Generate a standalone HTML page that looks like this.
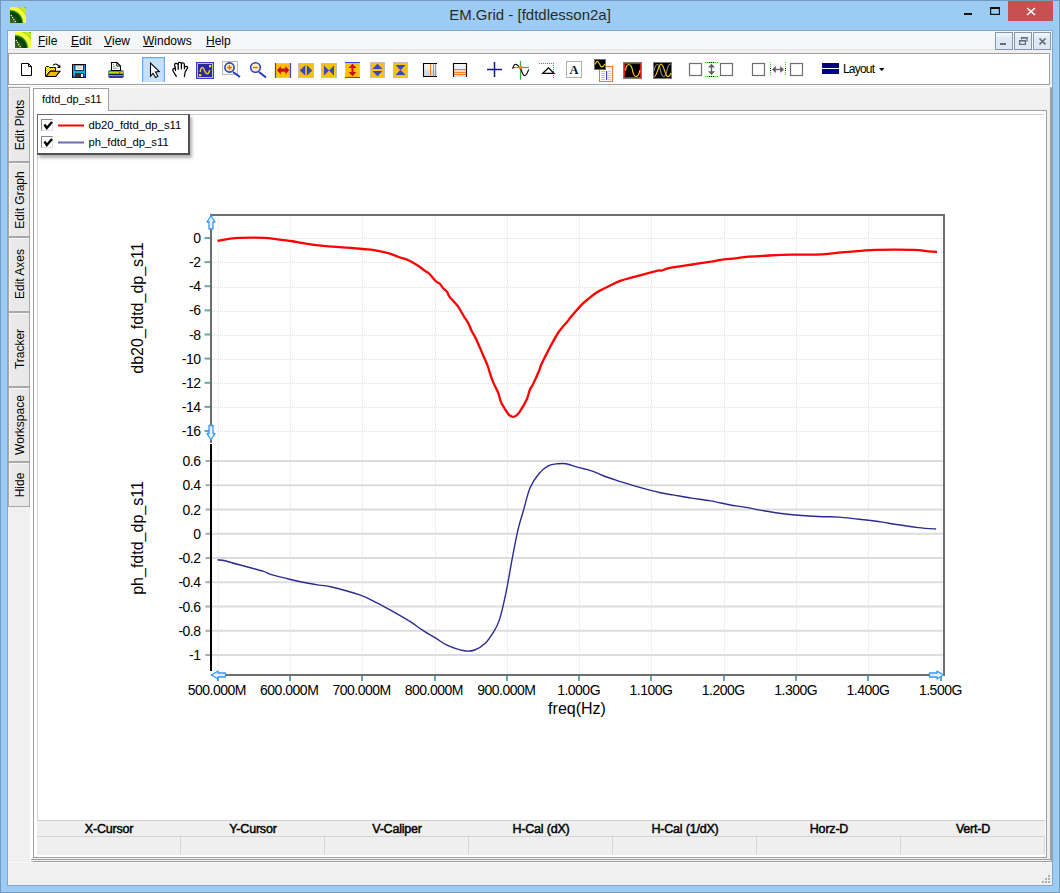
<!DOCTYPE html>
<html><head><meta charset="utf-8">
<style>
*{margin:0;padding:0;box-sizing:border-box}
html,body{width:1060px;height:893px;overflow:hidden;background:#f0f0f0;font-family:"Liberation Sans",sans-serif;color:#000}
.a{position:absolute}
#frame{left:0;top:0;width:1060px;height:893px;background:#9ccbf3;border:1px solid #7598bb}
#client{left:7px;top:30px;width:1046px;height:856px;border:1px solid #7fa8ce;background:#f0f0f0}
#title{left:0;top:6px;width:1060px;text-align:center;font-size:15px;color:#2a2a2a;}
#menubar{left:8px;top:31px;width:1044px;height:18px;background:#f5f6f7}
#menusep{left:8px;top:49px;width:1044px;height:4px;background:#efefef;border-top:1px solid #e6e6e6}
.menu{top:34px;font-size:12px;line-height:14px}
.menu u{text-decoration:none;position:relative}
.menu u:after{content:'';position:absolute;left:0;right:0;top:12px;height:1px;background:#000}
#toolbar{left:8px;top:53px;width:1042px;height:32px;background:#fff;border:1px solid #a0a0a0}
#main{left:8px;top:85px;width:1044px;height:800px;background:#f0f0f0;border-top:1px solid #fff}
#status{left:8px;top:862px;width:1044px;height:23px;background:#f0f0f0;border-top:1px solid #fafafa}
.vtab{left:8px;width:22px;border:1px solid #a8a8a8;background:#e9e9e9;box-shadow:inset 1px 1px #f6f6f6}
.vtab span{position:absolute;left:calc(50% + 1px);top:50%;transform:translate(-50%,-50%) rotate(-90deg);font-size:12px;white-space:nowrap}
#tabpage{left:33px;top:110px;width:1014px;height:748px;background:#fff;border:1px solid #a0a0a0}
#outerframe{left:30px;top:87px;width:1022px;height:775px;border-left:3px solid #fff;border-top:1px solid #fff;border-right:1px solid #a0a0a0;border-bottom:1px solid #a0a0a0}
#outerframe2{left:31px;top:87px;width:1020px;height:773px;border-right:1px solid #a0a0a0;border-bottom:1px solid #a0a0a0;border-top:none}
#doctab{left:33px;top:88px;width:76px;height:23px;background:#fff;border:1px solid #a0a0a0;border-bottom:none;font-size:11px;padding:4px 0 0 8px}
#content{left:37px;top:114px;width:1007px;height:741px;background:#fff;border-left:1px solid #d0d0d0;border-top:1px solid #d0d0d0}
#legend{left:37px;top:114px;width:153px;height:41px;background:#fff;border:1px solid #6a6a6a;border-bottom:2px solid #505050;border-right:2px solid #505050;box-shadow:2px 3px 3px rgba(0,0,0,.3)}
.cb{width:12px;height:12px;border:1px solid #8a8a8a;border-right-color:#e0e0e0;border-bottom-color:#e0e0e0;background:#fff}
#grid{left:37px;top:820px;width:1008px;height:35px;background:#efefef;border-top:1px solid #d0d0d0}
.gh{top:822px;height:15px;font-size:12.5px;font-weight:normal;-webkit-text-stroke:0.45px #000;text-align:center;line-height:15px;letter-spacing:-0.2px}
.gsep{top:837px;width:1px;height:17px;background:#d4d4d4}
svg{position:absolute;left:0;top:0}
</style></head><body>
<div class="a" id="frame"></div><div class="a" id="client"></div>
<svg width="1060" height="893" style="z-index:1">
 <!-- app icon title -->
 <defs>
  <radialGradient id="leaf" cx="0" cy="1" r="1.42">
   <stop offset="0" stop-color="#4a6a10"/><stop offset=".25" stop-color="#2a5a0a"/><stop offset=".45" stop-color="#003c00"/><stop offset=".53" stop-color="#107010"/><stop offset=".6" stop-color="#f0ff40"/><stop offset=".72" stop-color="#f8ff30"/><stop offset=".8" stop-color="#a8e010"/><stop offset=".87" stop-color="#d0f830"/><stop offset="1" stop-color="#68a000"/>
  </radialGradient>
 </defs>
 <rect x="10" y="7" width="16" height="16" fill="url(#leaf)"/>
 <path d="M11,15 L16,23" stroke="#fff" stroke-width="1.2" stroke-dasharray="1.2,1.2"/>
 <!-- title buttons -->
 <rect x="964" y="13" width="8" height="2" fill="#111"/>
 <rect x="990.6" y="7.6" width="8.8" height="6.8" fill="none" stroke="#111" stroke-width="1.2"/>
 <rect x="990" y="7" width="10" height="2" fill="#111"/>
 <rect x="1008" y="1" width="45" height="20" fill="#c75050"/>
 <path d="M1027,8 L1035,15 M1035,8 L1027,15" stroke="#fff" stroke-width="1.6"/>
</svg>
<div class="a" id="title">EM.Grid - [fdtdlesson2a]</div>
<div class="a" id="menubar"></div>
<div class="a" id="menusep"></div>
<svg width="1060" height="893" style="z-index:2">
 <rect x="15" y="32" width="16" height="16" fill="url(#leaf)"/>
 <path d="M16,40 L21,48" stroke="#fff" stroke-width="1.2" stroke-dasharray="1.2,1.2"/>
 <!-- MDI buttons -->
 <defs><linearGradient id="mdi" x1="0" y1="0" x2="0" y2="1"><stop offset="0" stop-color="#f4f8fc"/><stop offset=".25" stop-color="#e6eef8"/><stop offset=".3" stop-color="#dde9f6"/><stop offset="1" stop-color="#dce8f5"/></linearGradient></defs>
 <rect x="995.5" y="32.5" width="17" height="17" fill="url(#mdi)" stroke="#8797a8"/>
 <rect x="1014.5" y="32.5" width="17" height="17" fill="url(#mdi)" stroke="#8797a8"/>
 <rect x="1033.5" y="32.5" width="17" height="17" fill="url(#mdi)" stroke="#8797a8"/>
 <rect x="1000" y="43" width="6" height="2" fill="#646e78"/>
 <rect x="1019.6" y="40.6" width="5.8" height="3.8" fill="none" stroke="#646e78" stroke-width="1.2"/>
 <rect x="1019" y="40" width="7" height="1.5" fill="#646e78"/>
 <path d="M1021.5,39.5 V37.6 H1027 V41.8" fill="none" stroke="#646e78" stroke-width="1.2"/>
 <rect x="1021" y="37" width="6.5" height="1.5" fill="#646e78"/>
 <path d="M1039.5,38.5 L1045.5,44.3 M1045.5,38.5 L1039.5,44.3" stroke="#646e78" stroke-width="1.7"/>
</svg>
<div class="a menu" style="left:38px"><u>F</u>ile</div>
<div class="a menu" style="left:71px"><u>E</u>dit</div>
<div class="a menu" style="left:104px"><u>V</u>iew</div>
<div class="a menu" style="left:143px"><u>W</u>indows</div>
<div class="a menu" style="left:206px"><u>H</u>elp</div>
<div class="a" id="toolbar"></div>
<div class="a" id="main"></div>
<div class="a" id="status"></div>
<div class="a vtab" style="top:87px;height:75px"><span>Edit Plots</span></div>
<div class="a vtab" style="top:162px;height:75px"><span>Edit Graph</span></div>
<div class="a vtab" style="top:237px;height:75px"><span style="margin-top:-1px">Edit Axes</span></div>
<div class="a vtab" style="top:312px;height:75px"><span style="margin-top:-1px">Tracker</span></div>
<div class="a vtab" style="top:387px;height:75px"><span>Workspace</span></div>
<div class="a vtab" style="top:462px;height:45px"><span>Hide</span></div>
<div class="a" id="outerframe"></div><div class="a" id="outerframe2"></div>
<div class="a" id="tabpage"></div>
<div class="a" id="doctab">fdtd_dp_s11</div>
<div class="a" id="content"></div>
<div class="a" id="grid"></div>
<div class="a gh" style="left:37px;width:144px">X-Cursor</div>
<div class="a gh" style="left:181px;width:144px">Y-Cursor</div>
<div class="a gh" style="left:325px;width:144px">V-Caliper</div>
<div class="a gh" style="left:469px;width:144px">H-Cal (dX)</div>
<div class="a gh" style="left:613px;width:144px">H-Cal (1/dX)</div>
<div class="a gh" style="left:757px;width:144px">Horz-D</div>
<div class="a gh" style="left:901px;width:144px">Vert-D</div>
<div class="a" style="left:37px;top:836px;width:1008px;height:1px;background:#d4d4d4"></div>
<div class="a gsep" style="left:180px"></div>
<div class="a gsep" style="left:324px"></div>
<div class="a gsep" style="left:468px"></div>
<div class="a gsep" style="left:612px"></div>
<div class="a gsep" style="left:756px"></div>
<div class="a gsep" style="left:900px"></div>
<div class="a gsep" style="left:1044px"></div>
<svg width="1060" height="893" style="z-index:3">
<line x1="212" y1="238.5" x2="943" y2="238.5" stroke="#e2e2e2" stroke-width="1" stroke-dasharray="1,1"/>
<line x1="212" y1="262.5" x2="943" y2="262.5" stroke="#e2e2e2" stroke-width="1" stroke-dasharray="1,1"/>
<line x1="212" y1="287.5" x2="943" y2="287.5" stroke="#e2e2e2" stroke-width="1" stroke-dasharray="1,1"/>
<line x1="212" y1="311.5" x2="943" y2="311.5" stroke="#e2e2e2" stroke-width="1" stroke-dasharray="1,1"/>
<line x1="212" y1="335.5" x2="943" y2="335.5" stroke="#e2e2e2" stroke-width="1" stroke-dasharray="1,1"/>
<line x1="212" y1="359.5" x2="943" y2="359.5" stroke="#e2e2e2" stroke-width="1" stroke-dasharray="1,1"/>
<line x1="212" y1="383.5" x2="943" y2="383.5" stroke="#e2e2e2" stroke-width="1" stroke-dasharray="1,1"/>
<line x1="212" y1="407.5" x2="943" y2="407.5" stroke="#e2e2e2" stroke-width="1" stroke-dasharray="1,1"/>
<line x1="212" y1="431.5" x2="943" y2="431.5" stroke="#e2e2e2" stroke-width="1" stroke-dasharray="1,1"/>
<line x1="212" y1="461.0" x2="943" y2="461.0" stroke="#dcdcdc" stroke-width="2"/>
<line x1="212" y1="485.2" x2="943" y2="485.2" stroke="#dcdcdc" stroke-width="2"/>
<line x1="212" y1="509.5" x2="943" y2="509.5" stroke="#dcdcdc" stroke-width="2"/>
<line x1="212" y1="533.8" x2="943" y2="533.8" stroke="#dcdcdc" stroke-width="2"/>
<line x1="212" y1="558.0" x2="943" y2="558.0" stroke="#dcdcdc" stroke-width="2"/>
<line x1="212" y1="582.2" x2="943" y2="582.2" stroke="#dcdcdc" stroke-width="2"/>
<line x1="212" y1="606.5" x2="943" y2="606.5" stroke="#dcdcdc" stroke-width="2"/>
<line x1="212" y1="630.8" x2="943" y2="630.8" stroke="#dcdcdc" stroke-width="2"/>
<line x1="212" y1="655.0" x2="943" y2="655.0" stroke="#dcdcdc" stroke-width="2"/>
<line x1="218.5" y1="216" x2="218.5" y2="674" stroke="#e2e2e2" stroke-width="1" stroke-dasharray="1,1"/>
<line x1="290.5" y1="216" x2="290.5" y2="674" stroke="#e2e2e2" stroke-width="1" stroke-dasharray="1,1"/>
<line x1="362.5" y1="216" x2="362.5" y2="674" stroke="#e2e2e2" stroke-width="1" stroke-dasharray="1,1"/>
<line x1="435.5" y1="216" x2="435.5" y2="674" stroke="#e2e2e2" stroke-width="1" stroke-dasharray="1,1"/>
<line x1="507.5" y1="216" x2="507.5" y2="674" stroke="#e2e2e2" stroke-width="1" stroke-dasharray="1,1"/>
<line x1="579.5" y1="216" x2="579.5" y2="674" stroke="#e2e2e2" stroke-width="1" stroke-dasharray="1,1"/>
<line x1="651.5" y1="216" x2="651.5" y2="674" stroke="#e2e2e2" stroke-width="1" stroke-dasharray="1,1"/>
<line x1="724.5" y1="216" x2="724.5" y2="674" stroke="#e2e2e2" stroke-width="1" stroke-dasharray="1,1"/>
<line x1="796.5" y1="216" x2="796.5" y2="674" stroke="#e2e2e2" stroke-width="1" stroke-dasharray="1,1"/>
<line x1="868.5" y1="216" x2="868.5" y2="674" stroke="#e2e2e2" stroke-width="1" stroke-dasharray="1,1"/>
<line x1="941.5" y1="216" x2="941.5" y2="674" stroke="#e2e2e2" stroke-width="1" stroke-dasharray="1,1"/>
<line x1="204.5" y1="238.0" x2="210" y2="238.0" stroke="#64aaa8" stroke-width="2"/>
<line x1="204.5" y1="262.1" x2="210" y2="262.1" stroke="#64aaa8" stroke-width="2"/>
<line x1="204.5" y1="286.2" x2="210" y2="286.2" stroke="#64aaa8" stroke-width="2"/>
<line x1="204.5" y1="310.4" x2="210" y2="310.4" stroke="#64aaa8" stroke-width="2"/>
<line x1="204.5" y1="334.5" x2="210" y2="334.5" stroke="#64aaa8" stroke-width="2"/>
<line x1="204.5" y1="358.6" x2="210" y2="358.6" stroke="#64aaa8" stroke-width="2"/>
<line x1="204.5" y1="382.8" x2="210" y2="382.8" stroke="#64aaa8" stroke-width="2"/>
<line x1="204.5" y1="406.9" x2="210" y2="406.9" stroke="#64aaa8" stroke-width="2"/>
<line x1="204.5" y1="431.0" x2="210" y2="431.0" stroke="#64aaa8" stroke-width="2"/>
<line x1="205.5" y1="461.0" x2="210" y2="461.0" stroke="#a8a8a8" stroke-width="2"/>
<line x1="205.5" y1="485.2" x2="210" y2="485.2" stroke="#a8a8a8" stroke-width="2"/>
<line x1="205.5" y1="509.5" x2="210" y2="509.5" stroke="#a8a8a8" stroke-width="2"/>
<line x1="205.5" y1="533.8" x2="210" y2="533.8" stroke="#a8a8a8" stroke-width="2"/>
<line x1="205.5" y1="558.0" x2="210" y2="558.0" stroke="#a8a8a8" stroke-width="2"/>
<line x1="205.5" y1="582.2" x2="210" y2="582.2" stroke="#a8a8a8" stroke-width="2"/>
<line x1="205.5" y1="606.5" x2="210" y2="606.5" stroke="#a8a8a8" stroke-width="2"/>
<line x1="205.5" y1="630.8" x2="210" y2="630.8" stroke="#a8a8a8" stroke-width="2"/>
<line x1="205.5" y1="655.0" x2="210" y2="655.0" stroke="#a8a8a8" stroke-width="2"/>
<line x1="218.0" y1="676" x2="218.0" y2="681" stroke="#64aaa8" stroke-width="2"/>
<line x1="290.0" y1="676" x2="290.0" y2="681" stroke="#64aaa8" stroke-width="2"/>
<line x1="362.0" y1="676" x2="362.0" y2="681" stroke="#64aaa8" stroke-width="2"/>
<line x1="435.0" y1="676" x2="435.0" y2="681" stroke="#64aaa8" stroke-width="2"/>
<line x1="507.0" y1="676" x2="507.0" y2="681" stroke="#64aaa8" stroke-width="2"/>
<line x1="579.0" y1="676" x2="579.0" y2="681" stroke="#64aaa8" stroke-width="2"/>
<line x1="651.0" y1="676" x2="651.0" y2="681" stroke="#64aaa8" stroke-width="2"/>
<line x1="724.0" y1="676" x2="724.0" y2="681" stroke="#64aaa8" stroke-width="2"/>
<line x1="796.0" y1="676" x2="796.0" y2="681" stroke="#64aaa8" stroke-width="2"/>
<line x1="868.0" y1="676" x2="868.0" y2="681" stroke="#64aaa8" stroke-width="2"/>
<line x1="941.0" y1="676" x2="941.0" y2="681" stroke="#64aaa8" stroke-width="2"/>
<path d="M211,443 V215 H944 V675 H211" fill="none" stroke="#6e6e6e" stroke-width="2"/>
<line x1="211" y1="444" x2="211" y2="671" stroke="#000" stroke-width="2"/>
<path d="M217.5,241.0 C219.4,240.6 225.1,239.3 228.9,238.8 C232.7,238.3 234.2,238.0 240.2,237.8 C246.2,237.6 258.7,237.6 264.7,237.8 C270.7,238.0 271.6,238.7 276.0,239.2 C280.4,239.7 286.4,240.3 291.1,241.0 C295.8,241.7 299.0,242.5 304.3,243.3 C309.6,244.1 316.9,245.1 323.2,245.8 C329.5,246.5 335.4,246.8 342.0,247.3 C348.6,247.8 357.4,248.5 362.8,249.0 C368.2,249.5 369.8,249.4 374.2,250.1 C378.6,250.8 385.1,252.2 389.2,253.3 C393.3,254.5 395.6,255.9 398.7,257.0 C401.8,258.1 404.8,258.6 408.0,260.0 C411.2,261.4 415.3,263.9 418.1,265.7 C420.9,267.5 423.1,269.5 425.0,270.9 C426.9,272.3 427.7,272.3 429.5,274.0 C431.3,275.7 433.8,279.3 435.6,281.0 C437.4,282.7 438.9,282.8 440.1,284.0 C441.3,285.2 441.7,286.7 442.9,288.0 C444.1,289.3 446.0,290.4 447.1,291.9 C448.2,293.4 447.8,294.5 449.6,296.9 C451.4,299.3 455.8,303.4 458.0,306.4 C460.2,309.4 461.9,313.1 463.1,315.0 C464.3,316.9 464.0,316.4 465.0,318.0 C466.0,319.6 467.9,322.5 469.0,324.7 C470.1,326.9 470.5,328.7 471.7,331.1 C472.9,333.5 474.2,334.9 476.1,338.9 C478.0,342.9 481.2,350.9 483.1,355.3 C485.0,359.7 486.3,362.3 487.5,365.4 C488.7,368.5 489.2,371.1 490.2,374.1 C491.2,377.1 492.3,380.2 493.7,383.4 C495.1,386.6 497.2,390.5 498.4,393.5 C499.6,396.5 499.8,399.1 500.8,401.6 C501.8,404.1 503.2,406.2 504.5,408.3 C505.8,410.4 507.2,413.0 508.5,414.4 C509.8,415.8 511.0,416.4 512.2,416.7 C513.4,416.9 514.6,416.8 515.9,415.9 C517.2,415.0 518.2,414.0 520.0,411.3 C521.8,408.6 525.1,403.1 526.7,399.6 C528.3,396.1 528.6,392.9 529.7,390.2 C530.8,387.5 531.8,386.8 533.4,383.4 C535.0,380.0 538.1,373.1 539.4,370.0 C540.7,366.9 539.7,367.9 541.3,364.5 C542.9,361.1 546.1,354.7 548.9,349.4 C551.7,344.1 555.2,337.2 558.3,332.5 C561.4,327.8 565.8,323.5 567.7,321.1 C569.7,318.7 567.9,320.4 570.0,317.9 C572.1,315.4 577.5,309.2 580.4,306.1 C583.3,303.0 584.5,301.9 587.5,299.5 C590.5,297.1 594.6,293.8 598.3,291.5 C602.0,289.2 605.8,287.6 609.6,285.8 C613.4,284.0 616.5,282.3 620.9,280.7 C625.3,279.1 630.0,278.0 636.0,276.4 C642.0,274.8 652.5,271.8 656.8,270.8 C661.0,269.8 659.3,271.1 661.5,270.6 C663.7,270.1 664.9,268.9 670.0,267.9 C675.1,266.9 685.4,265.5 692.3,264.5 C699.1,263.5 706.5,262.4 711.1,261.7 C715.7,260.9 716.0,260.6 720.0,260.0 C724.0,259.4 730.5,258.9 735.2,258.4 C739.9,257.8 743.5,257.1 748.2,256.7 C752.9,256.3 756.2,256.1 763.4,255.8 C770.6,255.5 781.8,254.9 791.6,254.7 C801.4,254.4 813.7,254.7 822.0,254.3 C830.3,253.9 835.0,253.0 841.5,252.4 C848.0,251.8 855.2,251.2 861.0,250.8 C866.8,250.4 867.5,250.0 876.2,249.8 C884.9,249.6 904.4,249.6 913.1,249.8 C921.8,250.1 924.3,250.9 928.3,251.3 C932.3,251.7 935.5,251.9 937.0,252.0" fill="none" stroke="#ff0000" stroke-width="2.3" stroke-linejoin="round"/>
<path d="M217.5,559.8 C218.8,560.0 221.6,560.0 225.1,560.8 C228.6,561.6 232.0,562.8 238.3,564.5 C244.6,566.2 257.5,569.5 262.8,571.1 C268.1,572.7 266.3,573.0 270.4,574.3 C274.5,575.6 281.8,577.3 287.4,578.7 C293.0,580.1 299.3,581.5 304.3,582.5 C309.3,583.5 313.1,584.2 317.5,584.9 C321.9,585.6 323.9,585.2 330.8,586.8 C337.7,588.4 351.6,592.1 359.1,594.7 C366.6,597.3 370.0,599.3 376.0,602.3 C382.0,605.3 389.2,609.4 394.9,612.6 C400.6,615.8 405.6,618.7 410.3,621.7 C415.0,624.7 418.9,627.9 423.2,630.7 C427.5,633.5 432.2,636.0 436.1,638.4 C440.0,640.8 441.7,642.7 446.4,644.8 C451.1,646.9 459.7,649.9 464.4,650.8 C469.1,651.7 471.3,651.2 474.7,650.0 C478.1,648.8 482.0,646.4 485.0,643.6 C488.0,640.8 490.4,637.1 492.8,633.2 C495.2,629.3 497.1,626.8 499.2,620.4 C501.3,614.0 503.7,603.6 505.6,594.6 C507.5,585.6 509.3,574.5 510.8,566.3 C512.3,558.1 513.4,552.0 514.7,545.6 C516.0,539.2 517.0,533.6 518.5,527.6 C520.0,521.6 521.8,516.2 523.7,509.6 C525.6,503.0 527.5,493.7 530.1,487.7 C532.7,481.7 536.1,477.1 539.1,473.5 C542.1,469.9 545.1,467.4 548.2,465.8 C551.3,464.2 554.5,464.1 557.5,463.8 C560.5,463.5 562.5,463.2 566.0,463.8 C569.5,464.4 574.0,466.2 578.3,467.4 C582.5,468.6 587.4,469.4 591.5,470.8 C595.6,472.2 598.7,473.9 602.8,475.5 C606.9,477.1 611.3,478.6 616.0,480.2 C620.7,481.8 626.4,483.5 631.1,484.9 C635.8,486.3 639.6,487.4 644.3,488.7 C649.0,490.0 654.7,491.5 659.4,492.5 C664.1,493.5 667.2,494.0 672.6,494.9 C678.0,495.8 685.2,497.1 691.5,498.1 C697.8,499.1 704.1,499.8 710.4,500.9 C716.7,502.0 723.3,503.6 729.2,504.7 C735.1,505.8 740.6,506.4 746.0,507.4 C751.4,508.3 755.5,509.3 761.8,510.4 C768.1,511.5 776.3,512.9 783.6,513.8 C790.9,514.7 798.8,515.3 805.4,515.8 C812.0,516.3 817.6,516.5 823.2,516.7 C828.8,516.9 833.0,516.7 839.0,517.1 C845.0,517.5 851.6,518.5 858.9,519.3 C866.2,520.1 876.7,521.3 882.6,522.1 C888.5,522.9 888.5,523.4 894.5,524.3 C900.5,525.2 911.4,526.8 918.3,527.6 C925.2,528.4 933.1,528.8 936.1,529.0" fill="none" stroke="#2a2a92" stroke-width="1.4" stroke-linejoin="round"/>
<path d="M211,215.5 L215,222 L213,222 L213,229 L209,229 L209,222 L207,222 Z" fill="#ececec" stroke="#3399ff" stroke-width="1.3" stroke-linejoin="round"/>
<path d="M211,440 L215,433.5 L213,433.5 L213,425.5 L209,425.5 L209,433.5 L207,433.5 Z" fill="#ececec" stroke="#3399ff" stroke-width="1.3" stroke-linejoin="round"/>
<path d="M211.5,675 L218,671 L218,673 L225.5,673 L225.5,677 L218,677 L218,679 Z" fill="#ececec" stroke="#3399ff" stroke-width="1.3" stroke-linejoin="round"/>
<path d="M943.5,675 L937,671 L937,673 L929.5,673 L929.5,677 L937,677 L937,679 Z" fill="#ececec" stroke="#3399ff" stroke-width="1.3" stroke-linejoin="round"/>
<g font-family="Liberation Sans" font-size="14" letter-spacing="-0.5" fill="#000">
<text x="200.5" y="243.0" text-anchor="end">0</text>
<text x="200.5" y="267.1" text-anchor="end">-2</text>
<text x="200.5" y="291.2" text-anchor="end">-4</text>
<text x="200.5" y="315.4" text-anchor="end">-6</text>
<text x="200.5" y="339.5" text-anchor="end">-8</text>
<text x="200.5" y="363.6" text-anchor="end">-10</text>
<text x="200.5" y="387.8" text-anchor="end">-12</text>
<text x="200.5" y="411.9" text-anchor="end">-14</text>
<text x="200.5" y="436.0" text-anchor="end">-16</text>
<text x="200.5" y="466.0" text-anchor="end">0.6</text>
<text x="200.5" y="490.2" text-anchor="end">0.4</text>
<text x="200.5" y="514.5" text-anchor="end">0.2</text>
<text x="200.5" y="538.8" text-anchor="end">0</text>
<text x="200.5" y="563.0" text-anchor="end">-0.2</text>
<text x="200.5" y="587.2" text-anchor="end">-0.4</text>
<text x="200.5" y="611.5" text-anchor="end">-0.6</text>
<text x="200.5" y="635.8" text-anchor="end">-0.8</text>
<text x="200.5" y="660.0" text-anchor="end">-1</text>
<text x="216.9" y="695" text-anchor="middle">500.000M</text>
<text x="289.2" y="695" text-anchor="middle">600.000M</text>
<text x="361.6" y="695" text-anchor="middle">700.000M</text>
<text x="433.9" y="695" text-anchor="middle">800.000M</text>
<text x="506.3" y="695" text-anchor="middle">900.000M</text>
<text x="578.6" y="695" text-anchor="middle">1.000G</text>
<text x="651.0" y="695" text-anchor="middle">1.100G</text>
<text x="723.3" y="695" text-anchor="middle">1.200G</text>
<text x="795.7" y="695" text-anchor="middle">1.300G</text>
<text x="868.0" y="695" text-anchor="middle">1.400G</text>
<text x="940.4" y="695" text-anchor="middle">1.500G</text>
</g>
<text x="577" y="714" font-family="Liberation Sans" font-size="16" text-anchor="middle">freq(Hz)</text>
<text transform="translate(143,308) rotate(-90)" font-family="Liberation Sans" font-size="16" text-anchor="middle">db20_fdtd_dp_s11</text>
<text transform="translate(143,538) rotate(-90)" font-family="Liberation Sans" font-size="16" text-anchor="middle">ph_fdtd_dp_s11</text>
<!-- grip -->
<g fill="#b0b0b0"><rect x="1048" y="875" width="2" height="2"/><rect x="1045" y="878" width="2" height="2"/><rect x="1048" y="878" width="2" height="2"/><rect x="1042" y="881" width="2" height="2"/><rect x="1045" y="881" width="2" height="2"/><rect x="1048" y="881" width="2" height="2"/></g>
</svg>
<div class="a" id="legend" style="z-index:4">
 <div class="a cb" style="left:3px;top:4px"></div>
 <div class="a cb" style="left:3px;top:21px"></div>
 <svg width="150" height="40" style="left:0;top:0">
  <path d="M6.5,9.5 L8.8,13 L14,7" fill="none" stroke="#000" stroke-width="2.3"/>
  <path d="M6.5,26.5 L8.8,30 L14,24" fill="none" stroke="#000" stroke-width="2.3"/>
  <line x1="20" y1="10.5" x2="46" y2="10.5" stroke="#ff0000" stroke-width="2"/>
  <line x1="20" y1="27.5" x2="46" y2="27.5" stroke="#6b6bb8" stroke-width="2"/>
  <text x="50.5" y="13.6" font-family="Liberation Sans" font-size="11.3">db20_fdtd_dp_s11</text>
  <text x="50.5" y="30.6" font-family="Liberation Sans" font-size="11.3">ph_fdtd_dp_s11</text>
 </svg>
</div>
<svg width="1060" height="893" style="z-index:5;position:absolute;left:0;top:0">
 <!-- new -->
 <path d="M21.5,63.5 H28.5 L31.5,66.5 V75.5 H21.5 Z" fill="#fff" stroke="#000" stroke-width="1"/>
 <path d="M28.5,63.5 V66.5 H31.5" fill="none" stroke="#000" stroke-width="1"/>
  <!-- open -->
 <defs><pattern id="chk" width="2" height="2" patternUnits="userSpaceOnUse"><rect width="2" height="2" fill="#fff"/><rect width="1" height="1" fill="#f5c400"/><rect x="1" y="1" width="1" height="1" fill="#f5c400"/></pattern></defs>
 <path d="M45.5,76.5 V67.5 L46.5,66.5 H48.5 L49.5,67.5 H55.5 V71 H50 L46.5,76.5 Z" fill="url(#chk)" stroke="#000" stroke-width="1"/>
 <path d="M46,76.5 L50,71.2 H60 L55.8,76.5 Z" fill="#f3b800" stroke="#000" stroke-width="1.1"/>
 <path d="M53.3,65.4 C54.3,63.6 56.8,63.4 58.6,65.8" fill="none" stroke="#000" stroke-width="1.2"/>
 <path d="M60.3,64.4 V68 H56.7 Z" fill="#000"/>
 <!-- save -->
 <rect x="72.5" y="64.5" width="13" height="13" fill="#08b0f0" stroke="#000"/>
 <rect x="75" y="65" width="8.5" height="5.5" fill="#fff" stroke="#000" stroke-width="0.8"/>
 <rect x="76.5" y="66.5" width="5.5" height="2.5" fill="#d8d8d8"/>
 <rect x="75" y="73" width="9" height="4.5" fill="#333"/>
 <rect x="81" y="74" width="2" height="3" fill="#fff"/>
 <rect x="73" y="75" width="1.5" height="2.5" fill="#4040d8"/>
 <rect x="84" y="75" width="1.5" height="2.5" fill="#4040d8"/>
 <!-- print -->
 <path d="M111.5,62.5 H117 L120.5,66 V70.5 H111.5 Z" fill="#fff" stroke="#000" stroke-width="1.1"/>
 <path d="M116.8,62.8 V66 H120.2" fill="none" stroke="#000" stroke-width="0.9"/>
 <path d="M113,64.5 H114 M113,66.3 H115 M113,68.3 H117" stroke="#888" stroke-width="0.9"/>
 <rect x="108.5" y="70.5" width="15" height="7.2" rx="1" fill="#000"/>
 <rect x="109" y="71" width="14" height="3.2" fill="#08b0f0"/>
 <rect x="109" y="72" width="10" height="1.2" fill="#b8e020"/>
 <rect x="119" y="72" width="1.5" height="1.2" fill="#f02020"/>
 <rect x="120.5" y="72" width="2.5" height="1.2" fill="#ffc000"/>
 <rect x="109" y="75" width="14" height="1.5" fill="#7090e0"/>
 <rect x="109" y="76.3" width="14" height="1" fill="#3030c0"/>
  <!-- pointer selected -->
 <rect x="142" y="57" width="23" height="25" fill="#c6e2fb"/>
 <path d="M142.6,82 V57.6 H164.4 V82" fill="none" stroke="#6aaaf0" stroke-width="1.2"/>
 <path d="M150.5,63 V76 L153,73.3 L155.6,77.6 L157.8,76.3 L155.5,72 L159.3,71.5 Z" fill="#fff" stroke="#000" stroke-width="1.1" stroke-linejoin="miter"/>
 <!-- hand -->
 <path d="M176.3,76.3 L173.3,71.5 C172.3,69.5 173,68.3 174.5,68.3 C175.5,68.3 175.5,69.5 175.5,70.6 M175.5,68.3 L174.6,65.5 C174.2,63.5 176.8,62.3 177.9,64.5 M178.2,69.3 V64 C178.2,61.8 181.4,61.8 181.4,64 V68.8 M181.4,64 C181.4,62.3 184.4,62.3 184.4,64.5 V68.8 M184.5,67.5 C185,66 187.8,66 187.6,67.8 L186.3,70.1 L185.2,72 L184.4,76.5" fill="none" stroke="#000" stroke-width="1.25" stroke-linecap="round"/>
  <!-- sine box -->
 <rect x="196" y="62" width="18" height="17" fill="#3040c8"/>
 <rect x="197.2" y="63.2" width="15.6" height="14.6" fill="#f0e4b8"/>
 <rect x="198" y="64" width="14" height="13" fill="#2a2aa0"/>
 <path d="M200.2,72 C200.8,66.5 202.8,66.5 204,69.5 C205.3,73 207,75 208.2,73.3 C209,72.2 209.5,71 209.7,70" fill="none" stroke="#f0c830" stroke-width="1.4"/>
 <rect x="209" y="65" width="2.2" height="2.2" fill="#f8d840"/>
 <rect x="199" y="74" width="2.2" height="2.2" fill="#f8d840"/>
 <!-- zoom in -->
 <rect x="222.5" y="61.5" width="15" height="13" fill="#fafafa" stroke="#b8b8b8"/>
 <line x1="233" y1="72" x2="240" y2="77" stroke="#2838c0" stroke-width="2"/>
 <circle cx="229.5" cy="67.5" r="4.6" fill="#fff0c0" stroke="#3040c8" stroke-width="1.6"/>
 <path d="M227,67.5 H232 M229.5,65 V70" stroke="#f07000" stroke-width="1.3"/>
 <!-- zoom out -->
 <line x1="259" y1="72" x2="266" y2="77.5" stroke="#2838c0" stroke-width="2"/>
 <circle cx="255.5" cy="67.5" r="4.8" fill="#fff0c0" stroke="#3040c8" stroke-width="1.6"/>
 <path d="M253,67.5 H258" stroke="#f07000" stroke-width="1.3"/>
  <!-- h expand -->
 <rect x="275.5" y="63.5" width="15" height="14" fill="#ffc000" stroke="#c8c8c8"/>
 <path d="M275.5,63 V78 M290.5,63 V78" stroke="#3b46d8" stroke-width="1.2"/>
 <path d="M277,70.2 L280.8,66 V68.6 H285.4 V66 L289.3,70.2 L285.4,74.5 V71.7 H280.8 V74.5 Z" fill="#c8101a"/>
 <!-- diamonds -->
 <rect x="298.5" y="63.5" width="15" height="14" fill="#ffc000" stroke="#c0c0c0"/>
 <path d="M299.8,70.4 L305.2,65.2 V75.6 Z M312.3,70.4 L306.9,65.2 V75.6 Z" fill="#3646c8"/>
 <!-- bowtie -->
 <rect x="321.5" y="63.5" width="15" height="14" fill="#ffc000" stroke="#c0c0c0"/>
 <path d="M324,65.4 L329,70.4 L324,75.6 Z M334,65.4 L329,70.4 L334,75.6 Z" fill="#3646c8"/>
  <!-- v expand -->
 <rect x="345.5" y="62.5" width="14" height="15" fill="#ffc000" stroke="#c8c8c8"/>
 <path d="M345,62.5 H360 M345,77.5 H360" stroke="#3b46d8" stroke-width="1.2"/>
 <path d="M352.5,63.6 L356.3,67.9 H353.5 V71.9 H356.3 L352.5,76.2 L348.7,71.9 H351.5 V67.9 H348.7 Z" fill="#c8101a"/>
 <!-- up/down triangles -->
 <rect x="370.5" y="62.5" width="14" height="15" fill="#ffc000" stroke="#c0c0c0"/>
 <path d="M372.4,68.9 L377.5,63.8 L382.4,68.9 Z M372.4,70.9 L377.5,76.2 L382.4,70.9 Z" fill="#3646c8"/>
 <!-- hourglass -->
 <rect x="393.5" y="62.5" width="14" height="15" fill="#ffc000" stroke="#c0c0c0"/>
 <path d="M395.5,64.9 H405.5 L400.5,70.2 Z M395.5,75 H405.5 L400.5,69.8 Z" fill="#3646c8"/>
 <!-- v lines box -->
 <defs><linearGradient id="gbox" x1="0" y1="0" x2="0" y2="1"><stop offset="0" stop-color="#f4f4f4"/><stop offset=".5" stop-color="#ececec"/><stop offset=".5" stop-color="#dedede"/><stop offset="1" stop-color="#d8d8d8"/></linearGradient></defs>
 <rect x="424" y="64" width="13" height="12" fill="url(#gbox)"/>
 <path d="M437,63.5 H423.5 V76.5 H437" fill="none" stroke="#000" stroke-width="1.1"/>
 <path d="M430.5,64 V76 M433.5,64 V76 M435.5,64 V76" stroke="#f88020" stroke-width="1"/>
 <!-- h lines box -->
 <rect x="454" y="64" width="12" height="13" fill="url(#gbox)"/>
 <path d="M453.5,77 V63.5 H466.5 V77" fill="none" stroke="#000" stroke-width="1.1"/>
 <path d="M454,69.5 H466 M454,72.5 H466 M454,74.5 H466" stroke="#f88020" stroke-width="1"/>
 <!-- cross -->
 <path d="M487,69.5 H502 M494.5,62 V77" stroke="#101a80" stroke-width="1.5"/>
  <!-- sine cursor -->
 <path d="M512.5,67.5 H529 M520.5,61 V79.7" stroke="#30b040" stroke-width="1.2"/>
 <path d="M512.7,68.8 C513.5,65 515,63.6 516.5,64.5 C518,65.5 519,66 520.5,68 C522,72 523,76 524.6,75.7 C526.5,75.5 527.5,72 528.8,69.5" fill="none" stroke="#000" stroke-width="1.1"/>
 <rect x="519" y="66" width="3.2" height="3.2" fill="#ff7a20"/>
 <!-- triangle -->
 <g fill="#ff20ff"><rect x="539" y="63" width="1" height="1"/><rect x="541" y="63" width="1" height="1"/><rect x="543" y="63" width="1" height="1"/><rect x="545" y="63" width="1" height="1"/><rect x="547" y="63" width="1" height="1"/><rect x="549" y="63" width="1" height="1"/><rect x="551" y="63" width="1" height="1"/><rect x="553" y="63" width="1" height="1"/><rect x="553" y="65" width="1" height="1"/><rect x="553" y="67" width="1" height="1"/><rect x="553" y="69" width="1" height="1"/><rect x="553" y="71" width="1" height="1"/><rect x="553" y="73" width="1" height="1"/><rect x="553" y="75" width="1" height="1"/><rect x="553" y="77" width="1" height="1"/></g>
 <path d="M542.8,73.3 L548.5,67.8 L554,73.3 Z" fill="#fff" stroke="#000" stroke-width="1.3" stroke-linejoin="miter"/>
 <!-- A box -->
 <rect x="566.5" y="61.5" width="15" height="16" fill="#fff" stroke="#b0b0b0"/>
 <text x="574" y="73.8" font-family="Liberation Serif" font-weight="bold" font-size="12.5" text-anchor="middle" fill="#101030">A</text>
 <!-- composite -->
 <rect x="599.5" y="66.5" width="13" height="15" fill="#fff" stroke="#f07828" stroke-width="1.1"/>
 <g stroke="#b8b8b8" stroke-width="0.9">
 <path d="M601.2,71.4 H605 M601.2,73.4 H605 M601.2,75.5 H605 M601.2,77.5 H605 M601.2,79.5 H605 M608,71.4 H611 M608,73.4 H611 M608,75.5 H611 M608,77.5 H611 M608,79.5 H611"/>
 </g>
 <path d="M606.6,71 V80" stroke="#3848d8" stroke-width="1.2"/>
 <rect x="594.5" y="59.5" width="11" height="10" fill="#000" stroke="#707070"/>
 <path d="M595.3,64.3 C596.3,60.5 598,60.5 599.5,64 C601,67.8 603,67.8 605,64.1" fill="none" stroke="#f8d000" stroke-width="1.1"/>
 <!-- red sine -->
 <rect x="623.5" y="62.5" width="18" height="16" fill="#000" stroke="#7a7a7a"/>
 <rect x="624.5" y="63.5" width="16" height="14" fill="#000" stroke="#e01818" stroke-width="1"/>
 <path d="M625.5,70.6 C626.5,62.5 631,62.5 632.5,70.5 C634,78.5 638.5,78.5 639.9,70.2" fill="none" stroke="#f8d800" stroke-width="1.2"/>
 <!-- double sine -->
 <rect x="653.5" y="62.5" width="18" height="16" fill="#000" stroke="#7a7a7a"/>
 <path d="M654.2,70.6 C655.5,62.5 659,62.5 660.5,70.4 C662,78.5 665.5,78.5 667,70.4 C668,65 669.5,63.5 670.5,64.5" fill="none" stroke="#8a8a8a" stroke-width="1.1"/>
 <path d="M654.2,76.7 C657,76.7 658.5,64.1 661,64.1 C664,64.1 665,76.7 668,76.7 C669.5,76.7 670.5,74.5 671.2,73" fill="none" stroke="#f8c800" stroke-width="1.2"/>
 <!-- squares -->
  <rect x="689.5" y="63.5" width="12" height="12" fill="#fff" stroke="#707070" stroke-width="1.2"/>
 <g><rect x="705" y="62" width="1" height="1" fill="#30e010"/><rect x="705" y="76" width="1" height="1" fill="#30e010"/><rect x="706" y="62" width="1" height="1" fill="#90f080"/><rect x="706" y="76" width="1" height="1" fill="#90f080"/><rect x="707" y="62" width="1" height="1" fill="#30e010"/><rect x="707" y="76" width="1" height="1" fill="#30e010"/><rect x="708" y="62" width="1" height="1" fill="#90f080"/><rect x="708" y="76" width="1" height="1" fill="#90f080"/><rect x="709" y="62" width="1" height="1" fill="#000"/><rect x="709" y="76" width="1" height="1" fill="#000"/><rect x="710" y="62" width="1" height="1" fill="#90f080"/><rect x="710" y="76" width="1" height="1" fill="#90f080"/><rect x="711" y="62" width="1" height="1" fill="#000"/><rect x="711" y="76" width="1" height="1" fill="#000"/><rect x="712" y="62" width="1" height="1" fill="#90f080"/><rect x="712" y="76" width="1" height="1" fill="#90f080"/><rect x="713" y="62" width="1" height="1" fill="#000"/><rect x="713" y="76" width="1" height="1" fill="#000"/><rect x="714" y="62" width="1" height="1" fill="#90f080"/><rect x="714" y="76" width="1" height="1" fill="#90f080"/><rect x="715" y="62" width="1" height="1" fill="#30e010"/><rect x="715" y="76" width="1" height="1" fill="#30e010"/><rect x="716" y="62" width="1" height="1" fill="#90f080"/><rect x="716" y="76" width="1" height="1" fill="#90f080"/><rect x="717" y="62" width="1" height="1" fill="#30e010"/><rect x="717" y="76" width="1" height="1" fill="#30e010"/></g>
 <path d="M711.5,66.5 V72.5" stroke="#606060" stroke-width="1.3"/>
 <path d="M708,67.5 L711.5,63.8 L715,67.5 Z M708,71.3 L711.5,75 L715,71.3 Z" fill="#606060"/>
 <rect x="720.5" y="63.5" width="12" height="12" fill="#fff" stroke="#707070" stroke-width="1.2"/>
 <rect x="752.5" y="63.5" width="12" height="12" fill="#fff" stroke="#707070" stroke-width="1.2"/>
 <g><rect x="770" y="62" width="1" height="1" fill="#30e010"/><rect x="785" y="62" width="1" height="1" fill="#30e010"/><rect x="770" y="64" width="1" height="1" fill="#30e010"/><rect x="785" y="64" width="1" height="1" fill="#30e010"/><rect x="770" y="66" width="1" height="1" fill="#30e010"/><rect x="785" y="66" width="1" height="1" fill="#30e010"/><rect x="770" y="68" width="1" height="1" fill="#000"/><rect x="785" y="68" width="1" height="1" fill="#000"/><rect x="770" y="70" width="1" height="1" fill="#000"/><rect x="785" y="70" width="1" height="1" fill="#000"/><rect x="770" y="72" width="1" height="1" fill="#30e010"/><rect x="785" y="72" width="1" height="1" fill="#30e010"/><rect x="770" y="74" width="1" height="1" fill="#30e010"/><rect x="785" y="74" width="1" height="1" fill="#30e010"/></g>
 <path d="M775,69.5 H781" stroke="#606060" stroke-width="1.3"/>
 <path d="M775.8,66 L772,69.5 L775.8,73 Z M780.2,66 L784,69.5 L780.2,73 Z" fill="#606060"/>
 <rect x="790.5" y="63.5" width="12" height="12" fill="#fff" stroke="#707070" stroke-width="1.2"/>
 <!-- layout -->
 <rect x="822" y="63" width="17" height="5" fill="#000080"/>
 <rect x="822" y="69" width="17" height="5" fill="#000080"/>
 <text x="843" y="73" font-family="Liberation Sans" font-size="12" fill="#000" textLength="32">Layout</text>
 <path d="M879,68 H884.5 L881.75,71 Z" fill="#000"/>
</svg>

</body></html>
